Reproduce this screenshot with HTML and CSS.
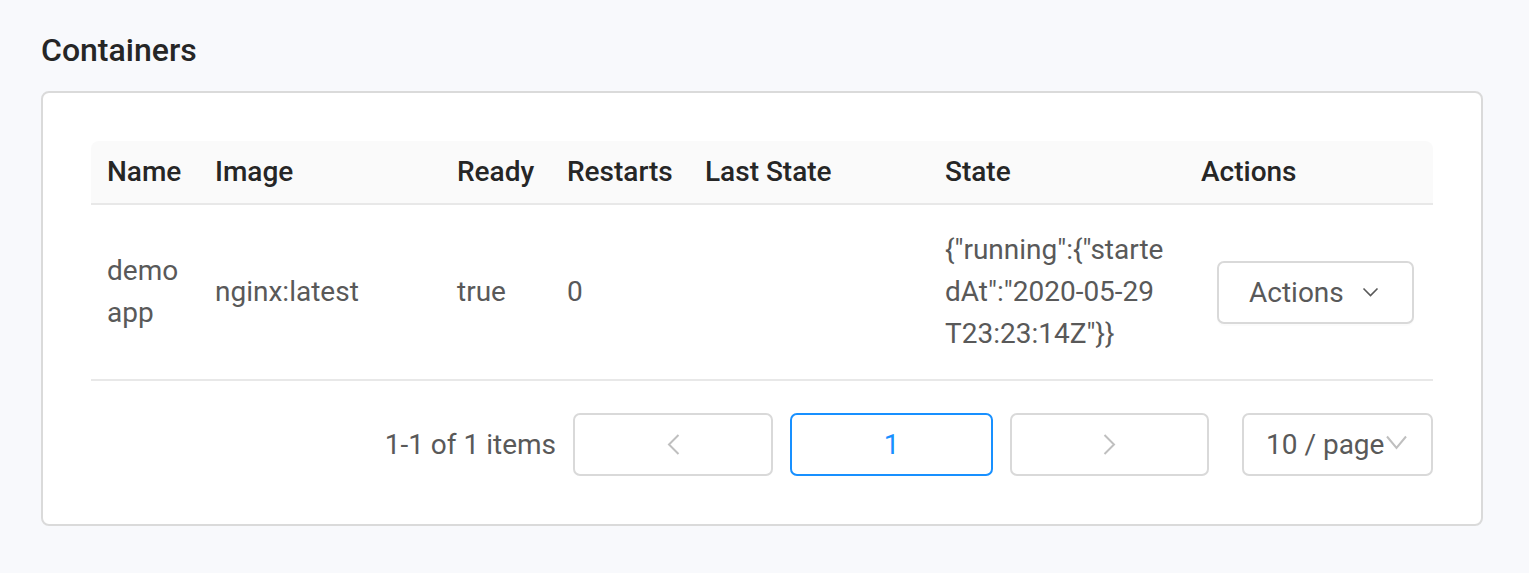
FILE: index.html
```html
<!DOCTYPE html>
<html lang="en">
<head>
<meta charset="utf-8">
<title>Containers</title>
<link rel="stylesheet" href="styles.css">
</head>
<body>
<div class="page">
  <h2 class="title">Containers</h2>
  <div class="card">
    <table class="table">
      <colgroup>
        <col class="c-name"><col class="c-image"><col class="c-ready"><col class="c-restarts"><col class="c-last"><col class="c-state"><col class="c-actions">
      </colgroup>
      <thead>
        <tr>
          <th>Name</th><th>Image</th><th>Ready</th><th>Restarts</th><th>Last State</th><th>State</th><th>Actions</th>
        </tr>
      </thead>
      <tbody>
        <tr>
          <td>demo app</td>
          <td>nginx:latest</td>
          <td>true</td>
          <td>0</td>
          <td></td>
          <td class="state"><span class="ln">{"running":{"starte</span><span class="ln">dAt":"2020-05-29</span><span class="ln">T23:23:14Z"}}</span></td>
          <td>
            <button class="btn" type="button">Actions
              <svg class="btn-caret" width="17" height="10" viewBox="0 0 17 10"><polyline points="1.5,1.5 8.5,8.5 15.5,1.5" fill="none" stroke="#595959" stroke-width="1.6"/></svg>
            </button>
          </td>
        </tr>
      </tbody>
    </table>
    <ul class="pager">
      <li class="pager-total">1-1 of 1 items</li>
      <li class="pager-btn pager-prev"><svg width="13" height="21" viewBox="0 0 13 21"><polyline points="11.5,1 2,10.5 11.5,20" fill="none" stroke="#bfbfbf" stroke-width="2"/></svg></li>
      <li class="pager-btn pager-item active">1</li>
      <li class="pager-btn pager-next"><svg width="13" height="21" viewBox="0 0 13 21"><polyline points="1.5,1 11,10.5 1.5,20" fill="none" stroke="#bfbfbf" stroke-width="2"/></svg></li>
      <li class="pager-btn pager-size"><span>10 / page</span><svg class="size-caret" width="21" height="15" viewBox="0 0 21 15"><polyline points="1,1.5 10.5,13 20,1.5" fill="none" stroke="#bfbfbf" stroke-width="2"/></svg></li>
    </ul>
  </div>
</div>
</body>
</html>
```

FILE: styles.css
```css
html, body {
  margin: 0;
  padding: 0;
  background: #f8f9fc;
  font-family: Roboto, "Liberation Sans", Arial, sans-serif;
}

.page {
  padding: 26px 0 0 41px;
}

.title {
  margin: 0 0 17px;
  font-size: 32px;
  line-height: 48px;
  font-weight: 500;
  color: #262626;
}

.card {
  box-sizing: border-box;
  width: 1442px;
  background: #fff;
  border: 2px solid #dadada;
  border-radius: 8px;
  padding: 48px;
}

.table {
  width: 1342px;
  table-layout: fixed;
  border-collapse: separate;
  border-spacing: 0;
  font-size: 28px;
  line-height: 42px;
}

.c-name { width: 108px; }
.c-image { width: 242px; }
.c-ready { width: 110px; }
.c-restarts { width: 138px; }
.c-last { width: 240px; }
.c-state { width: 256px; }
.c-actions { width: 248px; }

.table th {
  text-align: left;
  font-weight: 500;
  color: #262626;
  background: #fafafa;
  padding: 10px 16px;
  border-bottom: 2px solid #e8e8e8;
}

.table th:first-child { border-top-left-radius: 8px; }
.table th:last-child { border-top-right-radius: 8px; }

.table td {
  color: #595959;
  padding: 24px 16px;
  border-bottom: 2px solid #e8e8e8;
  vertical-align: middle;
}

.state .ln {
  display: block;
  white-space: nowrap;
}

.btn {
  box-sizing: border-box;
  margin-left: 16px;
  width: 197px;
  height: 63px;
  display: flex;
  align-items: center;
  padding: 0 0 0 30px;
  background: #fff;
  border: 2px solid #d9d9d9;
  border-radius: 7px;
  font-family: inherit;
  font-size: 28px;
  color: #595959;
  box-shadow: 0 2px 0 rgba(0, 0, 0, 0.015);
}

.btn-caret {
  margin-left: 18px;
}

.pager {
  list-style: none;
  margin: 32px 0 0;
  padding: 0;
  display: flex;
  justify-content: flex-end;
  align-items: center;
  font-size: 28px;
  color: #595959;
}

.pager-total {
  margin-right: 17px;
}

.pager-btn {
  box-sizing: border-box;
  height: 63px;
  display: flex;
  align-items: center;
  justify-content: center;
  border: 2px solid #d9d9d9;
  border-radius: 7px;
  background: #fff;
}

.pager-prev { width: 200px; margin-right: 17px; }
.pager-item { width: 203px; margin-right: 17px; }
.pager-next { width: 199px; margin-right: 33px; }

.pager-item.active {
  border-color: #1890ff;
  color: #1890ff;
}

.pager-size {
  width: 191px;
  justify-content: flex-start;
  padding-left: 22px;
}

.size-caret {
  margin-left: 2px;
  margin-top: -4px;
}
```
